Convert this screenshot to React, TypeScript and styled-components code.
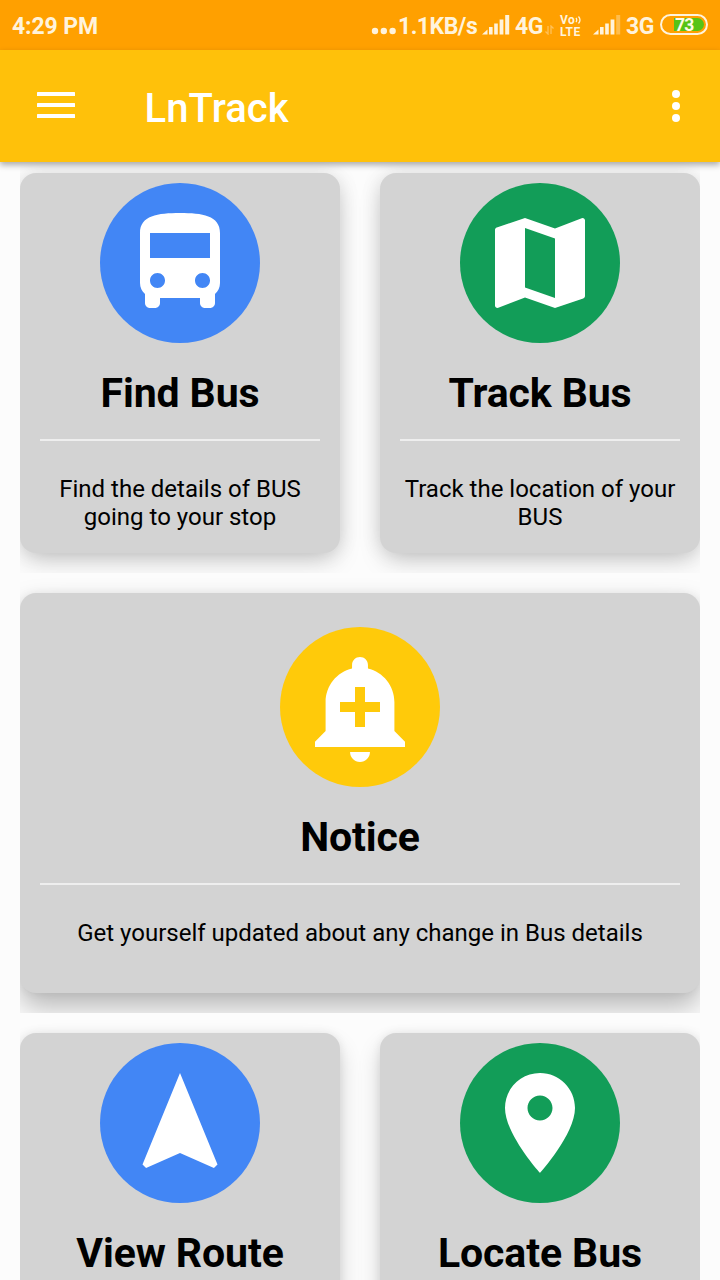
import React from "react";
import styled, { createGlobalStyle } from "styled-components";

const GlobalStyle = createGlobalStyle`
  * { box-sizing: border-box; }
  html, body { margin: 0; padding: 0; height: 100%; overflow: hidden; }
  body { background: #fcfcfc; font-family: Roboto, "Liberation Sans", sans-serif; color: #000; }
  svg { display: block; flex: none; }
`;

const Screen = styled.div`
  width: 720px;
  height: 1280px;
  display: flex;
  flex-direction: column;
  overflow: hidden;
  background: #fcfcfc;
`;

const StatusBar = styled.header`
  height: 50px;
  flex: none;
  display: flex;
  align-items: center;
  padding: 2px 12px 0;
  background: #ffa000;
  color: #fff3dc;
  font-size: 23px;
  line-height: 28px;
  font-weight: 700;
`;

const StatusText = styled.span<{ $gap?: number; $width?: number; $spacing?: number }>`
  flex: none;
  margin-top: 1px;
  margin-left: ${(p) => p.$gap ?? 0}px;
  width: ${(p) => (p.$width ? `${p.$width}px` : "auto")};
  letter-spacing: ${(p) => p.$spacing ?? 0}px;
  white-space: nowrap;
`;

const StatusIcons = styled.div`
  margin-left: auto;
  display: flex;
  align-items: center;
`;

const StatusIcon = styled.svg<{ $gap: number; $drop?: number }>`
  margin: ${(p) => p.$drop ?? 0}px 0 0 ${(p) => p.$gap}px;
`;

const Volte = styled.span`
  width: 23px;
  flex: none;
  margin: -1px 0 0 6px;
  display: flex;
  flex-direction: column;
  font-size: 12px;
  line-height: 12px;
  font-weight: 700;
  letter-spacing: 0.4px;
`;

const VolteTop = styled.span`
  display: flex;
  align-items: center;
  height: 12px;
`;

const Battery = styled.span`
  width: 48px;
  height: 21px;
  flex: none;
  margin: -3px 0 0 5px;
  border: 2px solid #fff3dc;
  border-radius: 11px;
  padding: 2px;
  display: flex;
`;

const BatteryLevel = styled.span`
  flex: 1;
  margin-left: 10px;
  padding-left: 1px;
  display: flex;
  align-items: center;
  background: #57c315;
  border-radius: 0 7px 7px 0;
  font-size: 17.5px;
  line-height: 14px;
  font-weight: 700;
  letter-spacing: -0.7px;
  color: #fffbe8;
`;

const AppBar = styled.nav`
  position: relative;
  z-index: 1;
  height: 112px;
  flex: none;
  display: flex;
  align-items: center;
  padding: 0 40px 0 37px;
  background: #ffc10a;
  color: #fff;
  box-shadow: 0 3px 6px rgba(0, 0, 0, 0.32);
`;

const MenuIcon = styled.svg`
  margin-bottom: 2px;
`;

const AppTitle = styled.h1`
  flex: 1;
  margin: 6px 0 0 69.5px;
  font-size: 40px;
  line-height: 48px;
  font-weight: 500;
  letter-spacing: 0.1px;
`;

const Dashboard = styled.main`
  flex: 1;
  display: flex;
  flex-direction: column;
  gap: 40px;
  padding: 11px 20px 0;
`;

const Row = styled.section`
  flex: none;
  display: flex;
  gap: 40px;
  clip-path: inset(-20px 0 -20px 0);
`;

const shadows = {
  upper: "0 10px 26px -5px rgba(0,0,0,.22), 0 0 20px rgba(0,0,0,.1)",
  middle: "0 14px 28px rgba(0,0,0,.28), 0 0 8px rgba(0,0,0,.06)",
  lower: "0 12px 24px -2px rgba(0,0,0,.2), 0 0 10px rgba(0,0,0,.08)",
};

const CardBox = styled.article<{ $tall?: boolean; $shadow: keyof typeof shadows }>`
  flex: 1;
  height: ${(p) => (p.$tall ? 400 : 380)}px;
  padding: ${(p) => (p.$tall ? 34 : 10)}px 20px 0;
  display: flex;
  flex-direction: column;
  align-items: center;
  border-radius: 16px;
  background: #d3d3d3;
  box-shadow: ${(p) => shadows[p.$shadow]};
`;

const Disc = styled.div<{ $color: string }>`
  width: 160px;
  height: 160px;
  flex: none;
  padding: 20px;
  border-radius: 50%;
  background: ${(p) => p.$color};
`;

const CardTitle = styled.h2`
  margin: 25px 0 0;
  font-size: 41px;
  line-height: 50px;
  font-weight: 700;
  letter-spacing: -0.1px;
  white-space: nowrap;
`;

const Rule = styled.hr`
  width: 100%;
  height: 2px;
  margin: 21px 0 0;
  border: 0;
  background: #eee;
`;

const Description = styled.p`
  width: 100%;
  margin: 34px 0 0;
  font-size: 24px;
  line-height: 28px;
  text-align: center;
`;

const icons = {
  bus: "M4 16c0 .88.39 1.67 1 2.22V20c0 .55.45 1 1 1h1c.55 0 1-.45 1-1v-1h8v1c0 .55.45 1 1 1h1c.55 0 1-.45 1-1v-1.78c.61-.55 1-1.34 1-2.22V6c0-3.5-3.58-4-8-4s-8 .5-8 4v10zm3.5 1c-.83 0-1.5-.67-1.5-1.5S6.67 14 7.5 14s1.5.67 1.5 1.5S8.33 17 7.5 17zm9 0c-.83 0-1.5-.67-1.5-1.5s.67-1.5 1.5-1.5 1.5.67 1.5 1.5-.67 1.5-1.5 1.5zm1.5-6H6V6h12v5z",
  map: "M20.5 3l-.16.03L15 5.1 9 3 3.36 4.9c-.21.07-.36.25-.36.48V20.5c0 .28.22.5.5.5l.16-.03L9 18.9l6 2.1 5.64-1.9c.21-.07.36-.25.36-.48V3.5c0-.28-.22-.5-.5-.5zM15 19l-6-2.11V5l6 2.11V19z",
  bell: "M10.01 21.01c0 1.1.89 1.99 1.99 1.99s1.99-.89 1.99-1.99h-3.98zm8.87-4.19V11c0-3.25-2.25-5.97-5.29-6.69v-.72C13.59 2.71 12.88 2 12 2s-1.59.71-1.59 1.59v.72C7.37 5.03 5.12 7.75 5.12 11v5.82L3 18.94V20h18v-1.06l-2.12-2.12zM16 13.01h-3v3h-2v-3H8V11h3V8h2v3h3v2.01z",
  arrow: "M12 2L4.5 20.29l.71.71L12 18l6.79 3 .71-.71z",
  pin: "M12 2C8.13 2 5 5.13 5 9c0 5.25 7 13 7 13s7-7.75 7-13c0-3.87-3.13-7-7-7zm0 9.5c-1.38 0-2.5-1.12-2.5-2.5s1.12-2.5 2.5-2.5 2.5 1.12 2.5 2.5-1.12 2.5-2.5 2.5z",
};

interface CardProps {
  icon: keyof typeof icons;
  color: string;
  title: string;
  text?: string;
  shadow: keyof typeof shadows;
  tall?: boolean;
}

function Card({ icon, color, title, text, shadow, tall }: CardProps) {
  return (
    <CardBox $tall={tall} $shadow={shadow}>
      <Disc $color={color}>
        <svg width="120" height="120" viewBox="0 0 24 24" fill="#fff">
          <path d={icons[icon]} />
        </svg>
      </Disc>
      <CardTitle>{title}</CardTitle>
      <Rule />
      {text && <Description>{text}</Description>}
    </CardBox>
  );
}

function Signal({ gap, weak }: { gap: number; weak?: boolean }) {
  return (
    <StatusIcon $gap={gap} $drop={-2} width="28" height="20" viewBox="0 0 28 20" fill="#fff3dc">
      <path d="M0 19.5L5.5 14.5V19.5z" />
      <rect x="7" y="12" width="3.6" height="7.5" />
      <rect x="12.2" y="8.5" width="3.6" height="11" />
      <rect x="17.6" y="4.5" width="3.8" height="15" />
      <rect x="23.2" y="0" width="4" height="19.5" opacity={weak ? 0.35 : 1} />
    </StatusIcon>
  );
}

const BLUE = "#4286f5";
const GREEN = "#129d58";
const YELLOW = "#ffca0a";

export default function App() {
  return (
    <>
      <GlobalStyle />
      <Screen>
        <StatusBar>
          <StatusText $spacing={-0.1}>4:29 PM</StatusText>
          <StatusIcons>
            <StatusIcon $gap={0} $drop={10} width="26" height="8" viewBox="0 0 26 8" fill="#fff3dc">
              <circle cx="4" cy="4" r="3.2" />
              <circle cx="12.8" cy="4" r="3.2" />
              <circle cx="21.6" cy="4" r="3.2" />
            </StatusIcon>
            <StatusText $gap={1} $width={80} $spacing={-0.5}>1.1KB/s</StatusText>
            <Signal gap={4} />
            <StatusText $gap={5} $width={30} $spacing={-0.5}>4G</StatusText>
            <StatusIcon $gap={0} $drop={8} width="9" height="10" viewBox="0 0 9 10" fill="none" stroke="#fff3dc" strokeWidth="1.3" opacity="0.4">
              <path d="M3 1v8L.5 6.5M6 9V1l2.5 2.5" />
            </StatusIcon>
            <Volte>
              <VolteTop>
                Vo
                <svg width="7" height="10" viewBox="0 0 7 10" fill="none" stroke="#fff3dc" strokeWidth="1.3">
                  <path d="M1 3Q2.5 5 1 7M3.5 1.5Q6.5 5 3.5 8.5" />
                </svg>
              </VolteTop>
              <span>LTE</span>
            </Volte>
            <Signal gap={10} weak />
            <StatusText $gap={5} $width={29} $spacing={-0.5}>3G</StatusText>
            <Battery>
              <BatteryLevel>73</BatteryLevel>
            </Battery>
          </StatusIcons>
        </StatusBar>
        <AppBar>
          <MenuIcon width="38" height="26" viewBox="0 0 38 26" fill="#fff">
            <rect width="38" height="4" rx=".5" />
            <rect y="11" width="38" height="4" rx=".5" />
            <rect y="22" width="38" height="4" rx=".5" />
          </MenuIcon>
          <AppTitle>LnTrack</AppTitle>
          <svg width="8" height="32" viewBox="0 0 8 32" fill="#fff">
            <circle cx="4" cy="4" r="4" />
            <circle cx="4" cy="16" r="4" />
            <circle cx="4" cy="28" r="4" />
          </svg>
        </AppBar>
        <Dashboard>
          <Row>
            <Card shadow="upper" icon="bus" color={BLUE} title="Find Bus" text="Find the details of BUS going to your stop" />
            <Card shadow="upper" icon="map" color={GREEN} title="Track Bus" text="Track the location of your BUS" />
          </Row>
          <Row>
            <Card tall shadow="middle" icon="bell" color={YELLOW} title="Notice" text="Get yourself updated about any change in Bus details" />
          </Row>
          <Row>
            <Card shadow="lower" icon="arrow" color={BLUE} title="View Route" />
            <Card shadow="lower" icon="pin" color={GREEN} title="Locate Bus" />
          </Row>
        </Dashboard>
      </Screen>
    </>
  );
}
